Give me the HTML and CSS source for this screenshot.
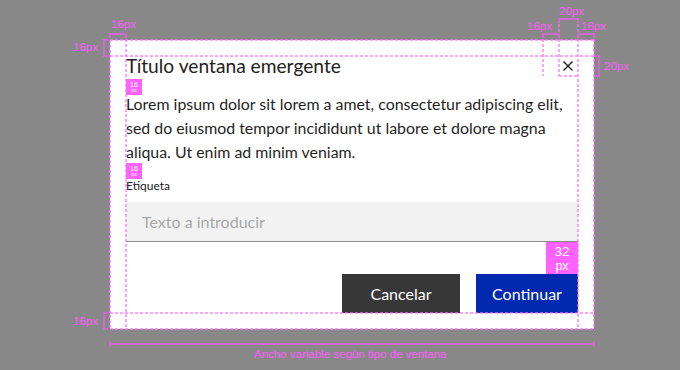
FILE: index.html
```html
<!DOCTYPE html>
<html lang="es">
<head>
<meta charset="utf-8">
<title>Ventana emergente</title>
<link rel="stylesheet" href="styles.css">
</head>
<body>
<div class="dialog">
  <div class="dialog-header">
    <h1 class="dialog-title">Título ventana emergente</h1>
    <button class="dialog-close" aria-label="Cerrar">
      <svg width="20" height="20" viewBox="0 0 20 20"><path d="M5.5 5.5 L14.5 14.5 M14.5 5.5 L5.5 14.5" stroke="#1a1a1a" stroke-width="1.4" fill="none"/></svg>
    </button>
  </div>
  <p class="dialog-body">Lorem ipsum dolor sit lorem a amet, consectetur adipiscing elit, sed do eiusmod tempor incididunt ut labore et dolore magna aliqua. Ut enim ad minim veniam.</p>
  <label class="field-label" for="campo">Etiqueta</label>
  <input class="field-input" id="campo" type="text" placeholder="Texto a introducir">
  <div class="dialog-actions">
    <button class="btn btn-secondary">Cancelar</button>
    <button class="btn btn-primary">Continuar</button>
  </div>
</div>

<div class="annotations">
  <svg class="guides" width="680" height="370" viewBox="0 0 680 370">
    <g class="dash">
      <line x1="110" y1="40" x2="594" y2="40"/>
      <line x1="110" y1="56" x2="594" y2="56"/>
      <line x1="110" y1="313" x2="594" y2="313"/>
      <line x1="110" y1="329" x2="594" y2="329"/>
      <line x1="110" y1="40" x2="110" y2="329"/>
      <line x1="126" y1="34" x2="126" y2="329"/>
      <line x1="578" y1="19" x2="578" y2="329"/>
      <line x1="594" y1="34" x2="594" y2="329"/>
      <line x1="543" y1="34" x2="543" y2="76"/>
      <line x1="559" y1="19" x2="559" y2="76"/>
      <line x1="559" y1="76" x2="578" y2="76"/>
    </g>
    <g class="bracket">
      <path d="M110 38 V34 H126 V38"/>
      <path d="M108 40 H104 V56 H108"/>
      <path d="M559 23 V19 H578 V23"/>
      <path d="M543 38 V34 H559 V38"/>
      <path d="M578 38 V34 H594 V38"/>
      <path d="M596 56 H599 V76 H596"/>
      <path d="M108 313 H104 V329 H108"/>
      <path d="M110 344 H594 M110 341 V347 M594 341 V347"/>
    </g>
  </svg>
  <span class="note note-top-left">16px</span>
  <span class="note note-left">16px</span>
  <span class="note note-top-close">20px</span>
  <span class="note note-gap-close">16px</span>
  <span class="note note-right-pad">16px</span>
  <span class="note note-close-h">20px</span>
  <span class="note note-bottom">16px</span>
  <span class="note note-width">Ancho variable según tipo de ventana</span>
  <span class="chip chip-title"><b>16</b><i>px</i></span>
  <span class="chip chip-body"><b>16</b><i>px</i></span>
  <span class="chip-32"><b>32</b><i>px</i></span>
</div>
</body>
</html>
```

FILE: styles.css
```css
html, body {
  margin: 0;
  padding: 0;
}
body {
  background: #888888;
  width: 680px;
  height: 370px;
  position: relative;
  overflow: hidden;
  font-family: "Lato", "Liberation Sans", sans-serif;
  color: #1f1f1f;
}

/* Dialog */
.dialog {
  margin: 40px 0 0 110px;
  width: 484px;
  box-sizing: border-box;
  padding: 16px;
  background: #ffffff;
  display: flex;
  flex-direction: column;
}
.dialog-header {
  display: flex;
  align-items: flex-start;
  gap: 16px;
}
.dialog-title {
  flex: 1;
  margin: 0;
  font-size: 19.2px;
  line-height: 20px;
  font-weight: 400;
  color: #222222;
}
.dialog-close {
  width: 20px;
  height: 20px;
  padding: 0;
  border: 0;
  background: transparent;
  display: flex;
}
.dialog-body {
  margin: 16px 0 0;
  font-size: 15.9px;
  line-height: 24px;
  color: #1f1f1f;
}
.field-label {
  margin-top: 16px;
  font-size: 12px;
  line-height: 12px;
  color: #222222;
}
.field-input {
  margin-top: 10px;
  height: 40px;
  box-sizing: border-box;
  border: 0;
  border-bottom: 1px solid #8c8c8c;
  background: #f2f2f2;
  padding: 0 16px;
  font-family: "Lato", "Liberation Sans", sans-serif;
  font-size: 16px;
  color: #222222;
  outline: none;
}
.field-input::placeholder {
  color: #a8a8a8;
}
.dialog-actions {
  margin-top: 32px;
  display: flex;
  justify-content: flex-end;
  gap: 16px;
}
.btn {
  height: 39px;
  border: 0;
  padding: 0 16px;
  font-family: "Lato", "Liberation Sans", sans-serif;
  font-size: 16px;
  color: #ffffff;
}
.btn-secondary {
  background: #373737;
  min-width: 118px;
}
.btn-primary {
  background: #0029af;
  min-width: 102px;
}

/* Annotations overlay */
.annotations {
  position: absolute;
  left: 0;
  top: 0;
  width: 680px;
  height: 370px;
  pointer-events: none;
}
.guides {
  position: absolute;
  left: 0;
  top: 0;
}
.dash line {
  stroke: rgba(255, 110, 255, 0.65);
  stroke-width: 2;
  stroke-dasharray: 3 2;
}
.bracket path {
  stroke: #d268d2;
  stroke-width: 2;
  fill: none;
}
.note {
  position: absolute;
  font-family: "Liberation Sans", Arial, sans-serif;
  font-size: 11.5px;
  line-height: 12px;
  color: #ff5cff;
  white-space: nowrap;
}
.note-top-left { left: 111px; top: 18px; }
.note-left { left: 73px; top: 41px; }
.note-top-close { left: 559px; top: 5px; }
.note-gap-close { left: 527px; top: 20px; }
.note-right-pad { left: 581px; top: 20px; }
.note-close-h { left: 604px; top: 60px; }
.note-bottom { left: 73px; top: 315px; }
.note-width { left: 254px; top: 348px; }

.chip {
  position: absolute;
  left: 126px;
  width: 16px;
  height: 16px;
  background: #ff63ff;
  color: #ffffff;
  display: flex;
  flex-direction: column;
  align-items: center;
  justify-content: center;
  font-family: "Liberation Sans", Arial, sans-serif;
}
.chip b {
  font-weight: 400;
  font-size: 7px;
  line-height: 7px;
}
.chip i {
  font-style: normal;
  font-size: 5px;
  line-height: 5px;
}
.chip-title { top: 79px; }
.chip-body { top: 163px; }
.chip-32 {
  position: absolute;
  left: 546px;
  top: 242px;
  width: 32px;
  height: 32px;
  background: #ff63ff;
  color: #ffffff;
  display: flex;
  flex-direction: column;
  align-items: center;
  justify-content: center;
  font-family: "Liberation Sans", Arial, sans-serif;
}
.chip-32 b {
  font-weight: 400;
  font-size: 13.5px;
  line-height: 15px;
}
.chip-32 i {
  font-style: normal;
  font-size: 12.5px;
  line-height: 14px;
}
```
